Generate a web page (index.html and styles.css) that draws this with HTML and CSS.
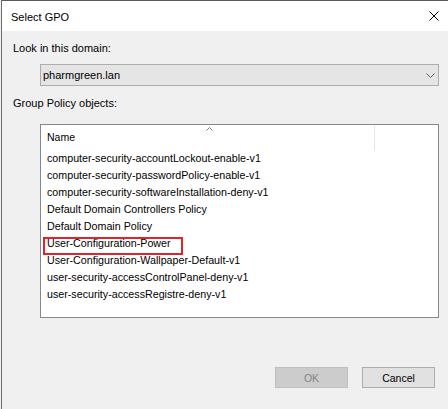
FILE: index.html
```html
<!DOCTYPE html>
<html>
<head>
<meta charset="utf-8">
<link rel="stylesheet" href="styles.css">
</head>
<body>
<div class="window">
  <div class="titlebar">
    <span class="title">Select GPO</span>
    <svg class="close" width="10" height="10" viewBox="0 0 10 10"><path d="M0.5 0.5 L9.5 9.5 M9.5 0.5 L0.5 9.5" stroke="#000" stroke-width="1" fill="none"/></svg>
  </div>
  <div class="content">
    <div class="label label-domain">Look in this domain:</div>
    <div class="combo">
      <span class="combo-text">pharmgreen.lan</span>
      <svg class="chev" width="9" height="5" viewBox="0 0 9 5"><path d="M0.5 0.5 L4.5 4.5 L8.5 0.5" stroke="#606060" stroke-width="1" fill="none"/></svg>
    </div>
    <div class="label label-gpo">Group Policy objects:</div>
    <div class="listbox">
      <div class="header">
        <div class="col-name">Name
          <svg class="sort" width="7" height="4" viewBox="0 0 7 4"><path d="M0.5 3.5 L3.5 0.5 L6.5 3.5" stroke="#7a7a7a" stroke-width="1" fill="none"/></svg>
        </div>
        <div class="col-sep"></div>
      </div>
      <div class="rows">
        <div class="row">computer-security-accountLockout-enable-v1</div>
        <div class="row">computer-security-passwordPolicy-enable-v1</div>
        <div class="row">computer-security-softwareInstallation-deny-v1</div>
        <div class="row">Default Domain Controllers Policy</div>
        <div class="row">Default Domain Policy</div>
        <div class="row"><span class="marked">User-Configuration-Power</span></div>
        <div class="row">User-Configuration-Wallpaper-Default-v1</div>
        <div class="row">user-security-accessControlPanel-deny-v1</div>
        <div class="row">user-security-accessRegistre-deny-v1</div>
      </div>
    </div>
    <div class="buttons">
      <div class="btn btn-disabled">OK</div>
      <div class="btn">Cancel</div>
    </div>
  </div>
</div>
</body>
</html>
```

FILE: styles.css
```css
html, body {
  margin: 0;
  padding: 0;
}
body {
  width: 448px;
  height: 409px;
  overflow: hidden;
  background: #f0f0f0;
  font-family: "Liberation Sans", Arial, sans-serif;
  font-size: 11px;
  color: #000;
}
.window {
  margin-left: 1px;
  height: 409px;
  border-left: 1px solid #6b6b6b;
  box-sizing: border-box;
  background: #f0f0f0;
}
.titlebar {
  height: 31px;
  background: #fff;
  border-top: 1px solid #5a5a5a;
  box-sizing: border-box;
  display: flex;
  align-items: center;
  justify-content: space-between;
  padding: 0 9px 0 9px;
}
.title {
  font-size: 11px;
  margin-top: 1px;
}
.close {
  display: block;
}
.content {
  padding: 0 0 0 11px;
  display: flex;
  flex-direction: column;
}
.label {
  height: 15px;
  line-height: 15px;
}
.label-domain {
  margin-top: 10px;
}
.combo {
  margin: 8px 0 0 27px;
  width: 399px;
  height: 22px;
  box-sizing: border-box;
  border: 1px solid #adadad;
  background: #e5e5e5;
  display: flex;
  align-items: center;
  justify-content: space-between;
  padding: 0 3px 0 2px;
}
.combo-text {
  color: #000;
}
.chev {
  display: block;
  margin-top: 1px;
}
.label-gpo {
  margin-top: 10px;
}
.listbox {
  margin: 13px 0 0 27px;
  width: 399px;
  height: 194px;
  box-sizing: border-box;
  border: 1px solid #828790;
  background: #fff;
}
.header {
  height: 25px;
  display: flex;
}
.col-name {
  position: relative;
  width: 333px;
  padding-left: 6px;
  box-sizing: border-box;
  line-height: 25px;
  font-size: 10.5px;
}
.sort {
  position: absolute;
  left: 165px;
  top: 2px;
}
.col-sep {
  width: 1px;
  margin-top: 1px;
  height: 24px;
  background: #e5e5e5;
}
.rows {
  display: flex;
  flex-direction: column;
}
.row {
  height: 17px;
  line-height: 17px;
  padding-left: 6px;
  white-space: nowrap;
  font-size: 10.7px;
}
.marked {
  position: relative;
}
.marked::after {
  content: "";
  position: absolute;
  left: -4px;
  top: 0px;
  width: 140px;
  height: 18px;
  box-sizing: border-box;
  border: 2px solid #e0242a;
}
.buttons {
  margin: 49px 0 0 0;
  display: flex;
  gap: 14px;
  padding-left: 262px;
}
.btn {
  width: 73px;
  height: 21px;
  box-sizing: border-box;
  border: 1px solid #adadad;
  background: #e1e1e1;
  display: flex;
  align-items: center;
  justify-content: center;
  font-size: 10.5px;
}
.btn-disabled {
  background: #cccccc;
  border-color: #bfbfbf;
  color: #838383;
}
```
